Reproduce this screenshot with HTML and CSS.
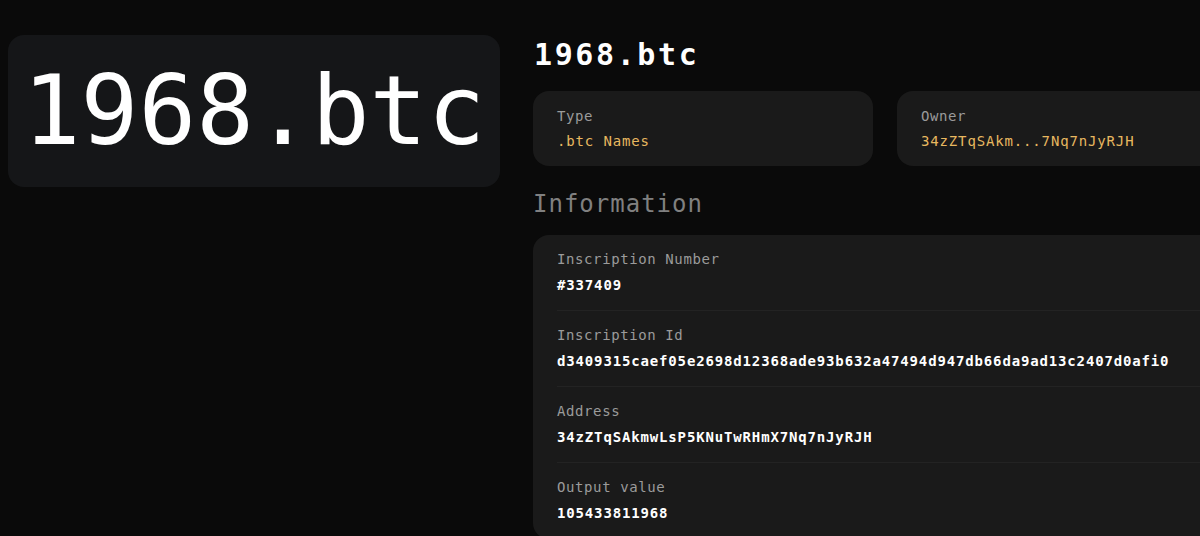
FILE: index.html
```html
<!DOCTYPE html>
<html>
<head>
<meta charset="utf-8">
<link rel="stylesheet" href="styles.css">
</head>
<body>
<div class="page">
  <div class="preview">
    <div class="preview-text">1968.btc</div>
  </div>
  <div class="details">
    <h1 class="title">1968.btc</h1>
    <div class="summary">
      <div class="card">
        <div class="label">Type</div>
        <div class="value gold">.btc Names</div>
      </div>
      <div class="card">
        <div class="label">Owner</div>
        <div class="value gold">34zZTqSAkm...7Nq7nJyRJH</div>
      </div>
    </div>
    <h2 class="section">Information</h2>
    <div class="info">
      <div class="row">
        <div class="label">Inscription Number</div>
        <div class="value">#337409</div>
      </div>
      <div class="row">
        <div class="label">Inscription Id</div>
        <div class="value">d3409315caef05e2698d12368ade93b632a47494d947db66da9ad13c2407d0afi0</div>
      </div>
      <div class="row">
        <div class="label">Address</div>
        <div class="value">34zZTqSAkmwLsP5KNuTwRHmX7Nq7nJyRJH</div>
      </div>
      <div class="row">
        <div class="label">Output value</div>
        <div class="value">105433811968</div>
      </div>
    </div>
  </div>
</div>
</body>
</html>
```

FILE: styles.css
```css
html, body {
  margin: 0;
  padding: 0;
  background: #0a0a0a;
  overflow: hidden;
}
body {
  font-family: "DejaVu Sans Mono", "Liberation Mono", monospace;
  color: #fff;
}
.page {
  display: flex;
  align-items: flex-start;
  gap: 33px;
  padding: 35px 0 0 8px;
  width: 1300px;
}
.preview {
  flex: 0 0 492px;
  height: 152px;
  background: #151618;
  border-radius: 16px;
  display: flex;
  align-items: center;
  justify-content: center;
}
.preview-text {
  font-size: 96px;
  line-height: 1;
  color: #fff;
  margin-top: -1px;
}
.details {
  flex: 0 0 704px;
  display: flex;
  flex-direction: column;
}
.title {
  margin: 0;
  font-size: 30px;
  font-weight: 700;
  line-height: 40px;
  letter-spacing: 2.6px;
  color: #fff;
  padding-left: 1px;
}
.summary {
  display: flex;
  gap: 24px;
  margin-top: 16px;
}
.card {
  flex: 1;
  background: #1a1a1a;
  border-radius: 16px;
  padding: 15px 24px;
  display: flex;
  flex-direction: column;
  gap: 5px;
}
.label {
  font-size: 14px;
  line-height: 20px;
  letter-spacing: 0.6px;
  color: #9b9b9b;
}
.value {
  font-size: 14px;
  line-height: 20px;
  letter-spacing: 0.85px;
  font-weight: 700;
  color: #fff;
}
.value.gold {
  color: #e8b860;
  font-weight: 400;
}
.section {
  margin: 22px 0 0;
  font-size: 24px;
  font-weight: 400;
  line-height: 32px;
  letter-spacing: 1px;
  color: #808080;
}
.info {
  margin-top: 15px;
  background: #1a1a1a;
  border-radius: 16px;
  padding: 0 24px;
  display: flex;
  flex-direction: column;
}
.row {
  display: flex;
  flex-direction: column;
  gap: 6px;
  padding: 14px 0 15px;
  border-bottom: 1px solid #232323;
}
```
